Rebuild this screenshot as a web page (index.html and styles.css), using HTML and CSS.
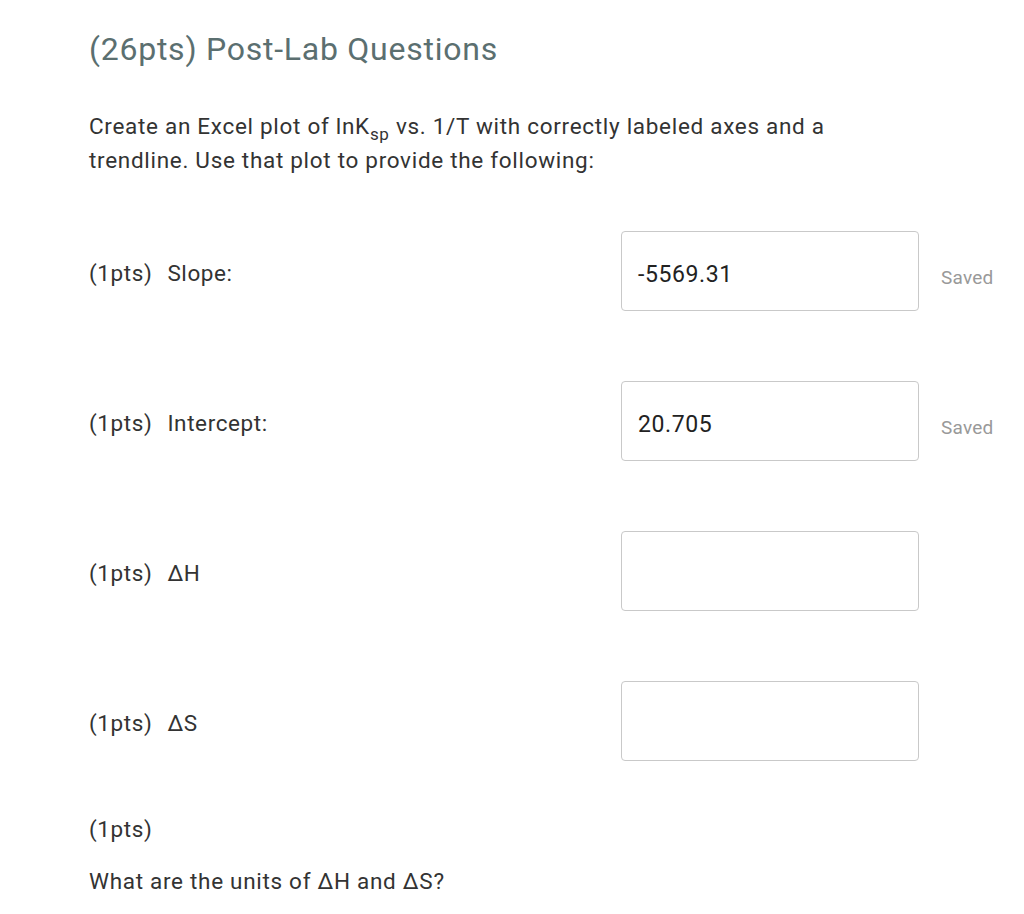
FILE: index.html
```html
<!DOCTYPE html>
<html>
<head>
<meta charset="utf-8">
<link rel="stylesheet" href="styles.css">
</head>
<body>
<div class="page">
  <h1 class="title">(26pts) Post-Lab Questions</h1>
  <p class="intro">Create an Excel plot of lnK<sub>sp</sub> vs. 1/T with correctly labeled axes and a trendline. Use that plot to provide the following:</p>

  <div class="row">
    <div class="label"><span class="pts">(1pts)</span><span>Slope:</span></div>
    <div class="field">-5569.31</div>
    <div class="status">Saved</div>
  </div>
  <div class="row">
    <div class="label"><span class="pts">(1pts)</span><span>Intercept:</span></div>
    <div class="field">20.705</div>
    <div class="status">Saved</div>
  </div>
  <div class="row">
    <div class="label"><span class="pts">(1pts)</span><span>ΔH</span></div>
    <div class="field"></div>
    <div class="status"></div>
  </div>
  <div class="row">
    <div class="label"><span class="pts">(1pts)</span><span>ΔS</span></div>
    <div class="field"></div>
    <div class="status"></div>
  </div>

  <p class="pts-line">(1pts)</p>
  <p class="question">What are the units of ΔH and ΔS?</p>
</div>
</body>
</html>
```
FILE: styles.css
```css
html, body {
  margin: 0;
  padding: 0;
  background: #fff;
}
body {
  font-family: Roboto, "Liberation Sans", sans-serif;
  color: #333;
}
.page {
  padding: 0 0 0 89px;
}
.title {
  margin: 0;
  padding-top: 31px;
  font-size: 32px;
  letter-spacing: 0.75px;
  line-height: 36px;
  font-weight: 400;
  color: #5b6f70;
}
.intro {
  margin: 42px 0 0 0;
  width: 770px;
  font-size: 22.5px;
  letter-spacing: 0.7px;
  line-height: 34px;
}
.intro sub {
  font-size: 17px;
  vertical-align: -6px;
  line-height: 0;
}
.row {
  display: flex;
  align-items: center;
  margin-top: 54px;
  height: 80px;
}
.row + .row {
  margin-top: 70px;
}
.label {
  width: 532px;
  font-size: 22.5px;
  letter-spacing: 0.6px;
  display: flex;
  gap: 15px;
  padding-top: 4px;
}
.field {
  box-sizing: border-box;
  width: 298px;
  height: 80px;
  border: 1px solid #c9c9c9;
  border-radius: 4px;
  padding: 6px 16px 0 16px;
  display: flex;
  align-items: center;
  font-size: 23px;
  letter-spacing: 0.6px;
  color: #222;
}
.status {
  margin-left: 22px;
  font-size: 19px;
  letter-spacing: 0.2px;
  color: #999;
  padding-top: 12px;
}
.pts-line {
  margin: 53px 0 0 0;
  font-size: 22.5px;
  letter-spacing: 0.6px;
  line-height: 30px;
}
.question {
  margin: 22px 0 0 0;
  font-size: 22.5px;
  letter-spacing: 0.7px;
  line-height: 30px;
}
```
